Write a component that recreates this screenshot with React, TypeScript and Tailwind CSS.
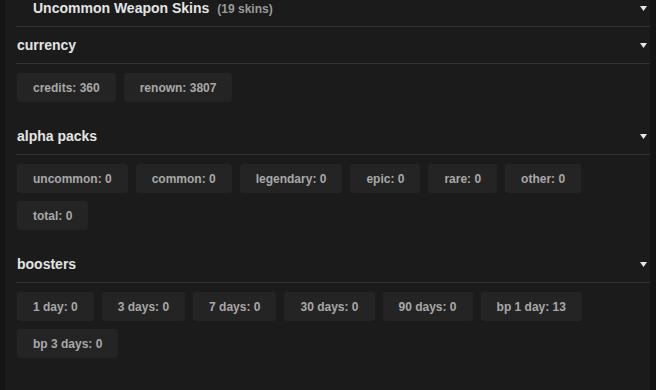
import React from 'react';

interface Section {
  title: string;
  items: Array<string>;
}

const sections: Array<Section> = [
  { title: 'currency', items: ['credits: 360', 'renown: 3807'] },
  {
    title: 'alpha packs',
    items: [
      'uncommon: 0',
      'common: 0',
      'legendary: 0',
      'epic: 0',
      'rare: 0',
      'other: 0',
      'total: 0',
    ],
  },
  {
    title: 'boosters',
    items: [
      '1 day: 0',
      '3 days: 0',
      '7 days: 0',
      '30 days: 0',
      '90 days: 0',
      'bp 1 day: 13',
      'bp 3 days: 0',
    ],
  },
];

const Caret: React.FC = () => (
  <svg width="7" height="5" viewBox="0 0 7 5" className="shrink-0">
    <polygon points="0,0 7,0 3.5,5" fill="#e8e8e8" />
  </svg>
);

const App: React.FC = () => {
  return (
    <div
      className="flex h-[390px] w-full overflow-hidden bg-[#151515]"
      style={{ fontFamily: '"Liberation Sans", Arial, sans-serif' }}
    >
      <div className="ml-[5px] mr-[6px] flex-1 overflow-hidden bg-[#1b1b1b] pl-[11px]">
        <div className="-mt-[9px] flex h-[36px] items-center border-b border-[#333333] pr-[3px]">
          <span className="ml-[17px] text-[14px] font-bold text-[#e4e4e4]">
            Uncommon Weapon Skins
          </span>
          <span className="ml-2 text-[12px] font-bold text-[#9a9a9a]">
            (19 skins)
          </span>
          <div className="flex-1" />
          <Caret />
        </div>

        {sections.map(section => (
          <div key={section.title} className="mb-[16px]">
            <div className="flex h-[37px] items-center border-b border-[#333333] pr-[3px]">
              <span className="pl-px text-[14px] font-bold text-[#e4e4e4]">
                {section.title}
              </span>
              <div className="flex-1" />
              <Caret />
            </div>
            <div className="flex flex-wrap gap-2 pt-[9px] pl-px">
              {section.items.map(item => (
                <div
                  key={item}
                  className="flex h-[29px] items-center rounded-[3px] bg-[#242424] px-4 text-[12px] font-bold text-[#a8a8a8]"
                >
                  {item}
                </div>
              ))}
            </div>
          </div>
        ))}
      </div>
    </div>
  );
};

export default App;
